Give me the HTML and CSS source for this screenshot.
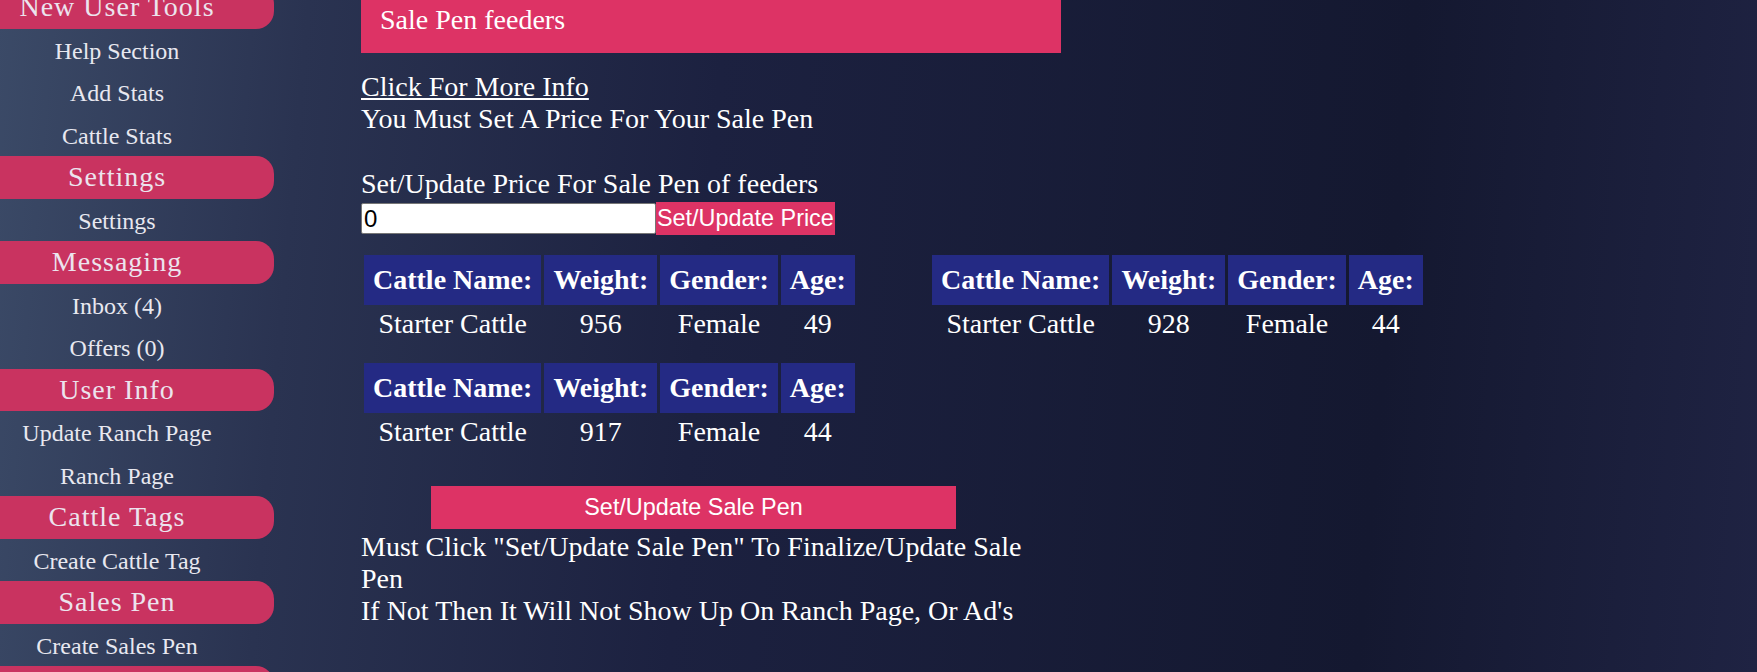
FILE: index.html
```html
<!DOCTYPE html>
<html lang="en">
<head>
    <meta charset="UTF-8">
    <meta name="viewport" content="width=device-width, initial-scale=1.0">
    <title>Sale Pen - feeders</title>
    <link rel="stylesheet" href="styles.css">
</head>
<body>

    <div class="page">

        <!-- left menu -->
        <div class="sidebar">
            <div class="nav-head">New User Tools</div>
            <a class="nav-link" href="#">Help Section</a>
            <a class="nav-link" href="#">Add Stats</a>
            <a class="nav-link" href="#">Cattle Stats</a>

            <div class="nav-head">Settings</div>
            <a class="nav-link" href="#">Settings</a>

            <div class="nav-head">Messaging</div>
            <a class="nav-link" href="#">Inbox (4)</a>
            <a class="nav-link" href="#">Offers (0)</a>

            <div class="nav-head">User Info</div>
            <a class="nav-link" href="#">Update Ranch Page</a>
            <a class="nav-link" href="#">Ranch Page</a>

            <div class="nav-head">Cattle Tags</div>
            <a class="nav-link" href="#">Create Cattle Tag</a>

            <div class="nav-head">Sales Pen</div>
            <a class="nav-link" href="#">Create Sales Pen</a>

            <div class="nav-head">Ranch Tools</div>
            <a class="nav-link" href="#">Logout</a>
        </div>

        <!-- sale pen content -->
        <div class="main">
            <h2 class="pen-title">Sale Pen feeders</h2>

            <a class="more-info" href="#">Click For More Info</a>
            <div class="line">You Must Set A Price For Your Sale Pen</div>
            <br>
            <div class="line price-label">Set/Update Price For Sale Pen of feeders</div>

            <div class="price-row">
                <input type="text" class="price-input" value="0">
                <button class="price-btn">Set/Update Price</button>
            </div>

            <div class="pen-grid">
                <table class="cattle-table">
                    <tr><th>Cattle Name:</th><th>Weight:</th><th>Gender:</th><th>Age:</th></tr>
                    <tr><td>Starter Cattle</td><td>956</td><td>Female</td><td>49</td></tr>
                </table>
                <table class="cattle-table">
                    <tr><th>Cattle Name:</th><th>Weight:</th><th>Gender:</th><th>Age:</th></tr>
                    <tr><td>Starter Cattle</td><td>928</td><td>Female</td><td>44</td></tr>
                </table>
                <table class="cattle-table">
                    <tr><th>Cattle Name:</th><th>Weight:</th><th>Gender:</th><th>Age:</th></tr>
                    <tr><td>Starter Cattle</td><td>917</td><td>Female</td><td>44</td></tr>
                </table>
            </div>

            <button class="pen-btn">Set/Update Sale Pen</button>

            <div class="notes">
                Must Click "Set/Update Sale Pen" To Finalize/Update Sale Pen<br>
                If Not Then It Will Not Show Up On Ranch Page, Or Ad's
            </div>
        </div>

    </div>

</body>
</html>
```

FILE: styles.css
```css
html, body {
    margin: 0;
    padding: 0;
    height: 100%;
}

body {
    font-family: "Liberation Serif", "Times New Roman", serif;
    font-size: 28px;
    color: #fff;
    background: linear-gradient(95deg, #3b4a67 0%, #2a3351 17%, #1c2140 40%, #141830 78%, #1f2343 100%);
    overflow: hidden;
}

/* page is shown scrolled down a little */
.page {
    display: flex;
    margin-top: -14px;
}

.sidebar {
    width: 274px;
    flex-shrink: 0;
    text-align: center;
}

.nav-head {
    background-color: #c93360;
    color: #ece4ee;
    font-size: 28px;
    letter-spacing: 1px;
    line-height: 42.7px;
    padding-right: 40px;
    border-radius: 0 18px 18px 0;
}

.nav-link {
    display: block;
    color: #e8e8f0;
    text-decoration: none;
    font-size: 24px;
    line-height: 40.4px;
    padding: 2px 40px 0 0;
}

.main {
    flex: 1;
    margin-left: 87px;
}

.pen-title {
    width: 700px;
    box-sizing: border-box;
    margin: 0 0 18px;
    padding: 18px 19px 17px;
    background-color: #dd3365;
    font-size: 28px;
    font-weight: normal;
}

.more-info {
    display: block;
    width: fit-content;
    color: #fff;
}

.price-label {
    padding-top: 1px;
}

.price-row {
    display: flex;
    align-items: center;
    margin-top: 2px;
    height: 33px;
}

.price-input {
    width: 295px;
    height: 31px;
    box-sizing: border-box;
    padding: 1px 2px;
    border: 1px solid #767676;
    border-radius: 2px;
    font-family: "Liberation Sans", Arial, sans-serif;
    font-size: 24px;
    color: #000;
}

.price-btn {
    height: 33px;
    padding: 0 1px;
    border: none;
    background-color: #dd3365;
    color: #fff;
    font-family: "Liberation Sans", Arial, sans-serif;
    font-size: 23.4px;
}

.pen-grid {
    display: grid;
    grid-template-columns: repeat(2, 568px);
    justify-items: start;
    align-items: start;
    margin-top: 17px;
}

.cattle-table {
    border-spacing: 3px;
    margin-bottom: 17px;
}

.cattle-table th {
    background-color: #242a84;
    font-size: 28px;
    padding: 9px 9px;
}

.cattle-table td {
    font-size: 28px;
    padding: 0 9px;
    text-align: center;
}

.pen-btn {
    display: block;
    width: 525px;
    height: 43px;
    margin: 18px 0 2px 70px;
    border: none;
    background-color: #dd3365;
    color: #fff;
    font-family: "Liberation Sans", Arial, sans-serif;
    font-size: 23.4px;
}

.notes {
    width: 700px;
}
```
